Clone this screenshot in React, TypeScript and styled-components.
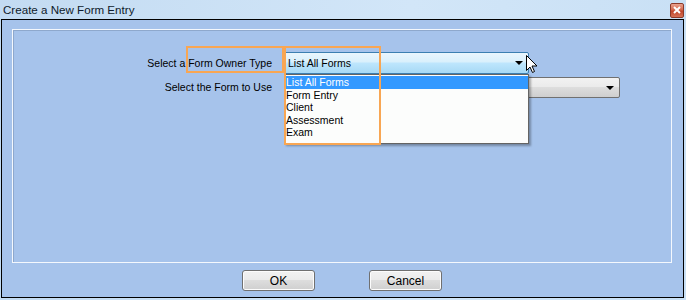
import styled, { createGlobalStyle } from "styled-components";

const GlobalStyle = createGlobalStyle`
  html, body {
    margin: 0;
    padding: 0;
    background: #d3e5f6;
  }
  * { box-sizing: border-box; }
`;

const Window = styled.div`
  width: 686px;
  height: 300px;
  display: flex;
  flex-direction: column;
  background: linear-gradient(90deg, #c3dbf2 0%, #d2e6f8 60%, #c9e0f5 100%);
  font-family: "Liberation Sans", Arial, sans-serif;
  color: #000;
  overflow: hidden;
`;

const TitleBar = styled.div`
  height: 19px;
  display: flex;
  align-items: center;
  justify-content: space-between;
  padding: 0 2px 0 3px;
`;

const Title = styled.span`
  font-size: 11.6px;
  color: #0e1a2b;
`;

const CloseButton = styled.div`
  width: 14px;
  height: 15px;
  margin-top: 1px;
  border: 1px solid #8b3a2a;
  border-radius: 2px;
  background: linear-gradient(180deg, #e9a28f 0%, #d4694f 45%, #c0442a 55%, #d77257 100%);
  display: flex;
  align-items: center;
  justify-content: center;
`;

const Body = styled.div`
  flex: 1;
  margin: 0 2px 2px 1px;
  border: 1px solid #000;
  background: #a6c3eb;
  display: flex;
  flex-direction: column;
  padding: 9px 11px 5px 10px;
`;

const Panel = styled.div`
  position: relative;
  height: 234px;
  border: 1px solid #f4f8fd;
  box-shadow: inset 1px 1px 0 #8ea8cc;
  padding: 22px 0 0 0;
`;

const FormGrid = styled.div`
  display: grid;
  grid-template-columns: 259px auto;
  column-gap: 12px;
  row-gap: 3px;
  align-items: center;
`;

const Label = styled.div`
  font-size: 10.5px;
  text-align: right;
  line-height: 21px;
`;

const ComboWrap = styled.div`
  position: relative;
`;

const Combo = styled.div<{ $width: number; $hover?: boolean }>`
  width: ${(p) => p.$width}px;
  height: ${(p) => (p.$hover ? 22 : 21)}px;
  border: 1px solid ${(p) => (p.$hover ? "#3c7fb1" : "#707070")};
  border-radius: 2px;
  background: ${(p) =>
    p.$hover
      ? "linear-gradient(180deg, #eaf6fd 0%, #d9f0fc 45%, #bee6fd 50%, #a7d9f5 100%)"
      : "linear-gradient(180deg, #f2f2f2 0%, #ebebeb 45%, #dddddd 50%, #cfcfcf 100%)"};
  display: flex;
  align-items: center;
  justify-content: space-between;
  padding: 0 5px 0 3px;
  font-size: 10.5px;
`;

const Arrow = styled.span`
  width: 0;
  height: 0;
  border-left: 4px solid transparent;
  border-right: 4px solid transparent;
  border-top: 4px solid #000;
`;

const DropList = styled.div`
  position: absolute;
  top: 22px;
  left: 0;
  width: 245px;
  height: 70px;
  background: #fcfdfc;
  border: 1px solid #646464;
  box-shadow: 2px 2px 2px rgba(0, 0, 0, 0.3);
  z-index: 2;
  padding-top: 1px;
`;

const Item = styled.div<{ $selected?: boolean }>`
  height: 12.6px;
  line-height: 12.6px;
  font-size: 10.5px;
  padding-left: 1px;
  background: ${(p) => (p.$selected ? "#3399ff" : "transparent")};
  color: ${(p) => (p.$selected ? "#fff" : "#000")};
`;

const Highlight = styled.div<{ $left: number; $top: number; $w: number; $h: number }>`
  position: absolute;
  left: ${(p) => p.$left}px;
  top: ${(p) => p.$top}px;
  width: ${(p) => p.$w}px;
  height: ${(p) => p.$h}px;
  border: 2px solid #f8a653;
  z-index: 3;
  pointer-events: none;
`;

const Cursor = styled.svg`
  position: absolute;
  left: 513px;
  top: 25px;
  z-index: 4;
`;

const ButtonRow = styled.div`
  display: flex;
  justify-content: center;
  gap: 54px;
  margin-top: 7px;
`;

const Button = styled.div`
  width: 73px;
  height: 21px;
  border: 1px solid #707070;
  border-radius: 3px;
  background: linear-gradient(180deg, #f2f2f2 0%, #ebebeb 45%, #dddddd 50%, #cfcfcf 100%);
  box-shadow: inset 0 0 0 1px #fcfcfc;
  display: flex;
  align-items: center;
  justify-content: center;
  font-size: 12px;
`;

const items = ["List All Forms", "Form Entry", "Client", "Assessment", "Exam"];

export default function App() {
  return (
    <>
      <GlobalStyle />
      <Window>
        <TitleBar>
          <Title>Create a New Form Entry</Title>
          <CloseButton>
            <svg width="8" height="8" viewBox="0 0 8 8">
              <path d="M1 1 L7 7 M7 1 L1 7" stroke="#fff" strokeWidth="2" />
            </svg>
          </CloseButton>
        </TitleBar>
        <Body>
          <Panel>
            <FormGrid>
              <Label>Select a Form Owner Type</Label>
              <ComboWrap>
                <Combo $width={245} $hover>
                  <span>List All Forms</span>
                  <Arrow />
                </Combo>
                <DropList>
                  {items.map((it, i) => (
                    <Item key={it} $selected={i === 0}>
                      {it}
                    </Item>
                  ))}
                </DropList>
              </ComboWrap>
              <Label>Select the Form to Use</Label>
              <Combo $width={336}>
                <span />
                <Arrow />
              </Combo>
            </FormGrid>
            <Highlight $left={173} $top={16} $w={98} $h={27} />
            <Highlight $left={271} $top={16} $w={97} $h={99} />
            <Cursor width="12" height="19" viewBox="0 0 12 19">
              <path
                d="M0.5 0.5 L0.5 15.5 L4 12 L6.5 17.5 L8.5 16.5 L6 11 L11 11 Z"
                fill="#fff"
                stroke="#000"
                strokeWidth="1"
              />
            </Cursor>
          </Panel>
          <ButtonRow>
            <Button>OK</Button>
            <Button>Cancel</Button>
          </ButtonRow>
        </Body>
      </Window>
    </>
  );
}
